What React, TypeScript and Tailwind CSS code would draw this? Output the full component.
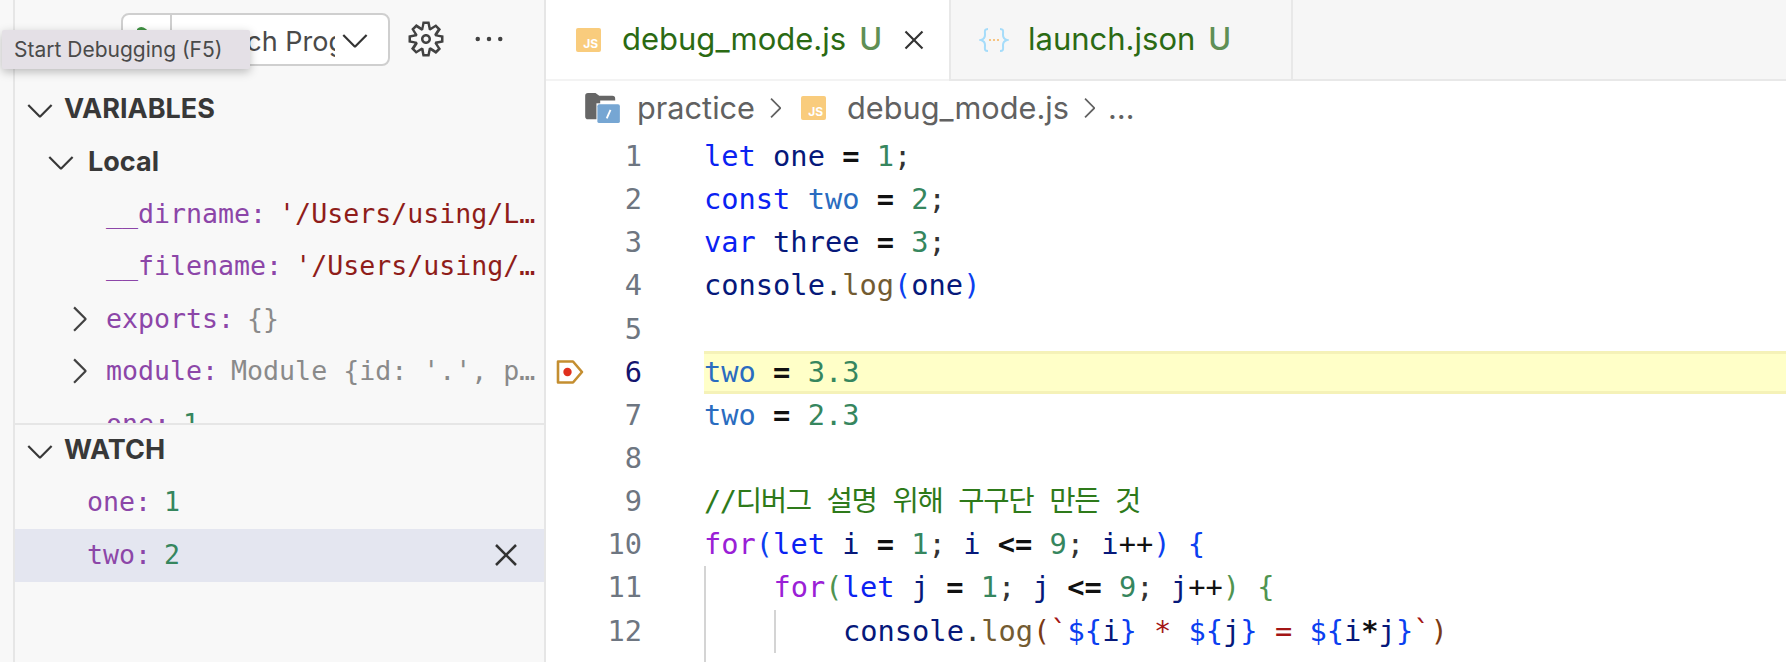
import { VscChevronDown, VscChevronRight, VscClose, VscEllipsis, VscGear } from "react-icons/vsc";

type Tok = [string, string];

const kw = "text-[#0a22f2]";
const id = "text-[#06187a]";
const cn = "text-[#2a6cc0]";
const nm = "text-[#36865e]";
const op = "text-[#111111] font-bold";
const pp = "text-[#111111]";
const pn = "text-[#333333]";
const fn = "text-[#735c32]";
const cm = "text-[#2e7a1a] tracking-[-1.4px]";
const ct = "text-[#9a20d6]";
const b1 = "text-[#0b3ff0]";
const b2 = "text-[#4f9450]";
const b3 = "text-[#7a3a14]";
const rd = "text-[#a31515]";

const lines: { indent?: number; toks: Tok[] }[] = [
  { toks: [["let", kw], [" one ", id], ["= ", op], ["1", nm], [";", pn]] },
  { toks: [["const", kw], [" ", id], ["two", cn], [" = ", op], ["2", nm], [";", pn]] },
  { toks: [["var", kw], [" three ", id], ["= ", op], ["3", nm], [";", pn]] },
  { toks: [["console", id], [".", pn], ["log", fn], ["(", b1], ["one", id], [")", b1]] },
  { toks: [] },
  { toks: [["two", cn], [" = ", op], ["3.3", nm]] },
  { toks: [["two", cn], [" = ", op], ["2.3", nm]] },
  { toks: [] },
  { toks: [["//디버그 설명 위해 구구단 만든 것", cm]] },
  {
    toks: [
      ["for", ct], ["(", b1], ["let", kw], [" i ", id], ["= ", op], ["1", nm], ["; ", pn], ["i ", id], ["<= ", op],
      ["9", nm], ["; ", pn], ["i", id], ["++", pp], [")", b1], [" ", pn], ["{", b1],
    ],
  },
  {
    indent: 1,
    toks: [
      ["for", ct], ["(", b2], ["let", kw], [" j ", id], ["= ", op], ["1", nm], ["; ", pn], ["j ", id], ["<= ", op],
      ["9", nm], ["; ", pn], ["j", id], ["++", pp], [")", b2], [" ", pn], ["{", b2],
    ],
  },
  {
    indent: 2,
    toks: [
      ["console", id], [".", pn], ["log", fn], ["(", b3], ["`", rd], ["${", b1], ["i", id], ["}", b1], [" ", rd], ["*", rd], [" ", rd],
      ["${", b1], ["j", id], ["}", b1], [" ", rd], ["=", rd], [" ", rd], ["${", b1], ["i", id], ["*", op], ["j", id], ["}", b1], ["`", rd], [")", b3],
    ],
  },
  { indent: 1, toks: [["}", b2]] },
];

function JsIcon() {
  return (
    <span className="flex h-[24px] w-[25px] shrink-0 items-end justify-end rounded-[2px] bg-[#f9cc7d] pr-[3px] pb-[2px] text-[12px] leading-none font-bold text-white">
      JS
    </span>
  );
}

function FolderIcon() {
  return (
    <svg width="36" height="30" viewBox="0 0 38 32" className="shrink-0">
      <path d="M0 3a3 3 0 0 1 3-3h8l4 3h14a3 3 0 0 1 3 3v2H16v20H3a3 3 0 0 1-3-3z" fill="#666666" />
      <rect x="12" y="11" width="26" height="21" fill="#ffffff" />
      <rect x="13" y="12" width="24" height="20" rx="2" fill="#76a6d3" />
      <path d="M23 27l4-9" stroke="#ffffff" strokeWidth="2" />
    </svg>
  );
}

function JsonIcon() {
  return (
    <svg width="30" height="28" viewBox="0 0 30 28" className="shrink-0">
      <path d="M9 3c-4 0-3 2-3 6 0 3-1 4-4 5 3 1 4 2 4 5 0 4-1 6 3 6" fill="none" stroke="#a5dcfa" strokeWidth="2" />
      <path d="M21 3c4 0 3 2 3 6 0 3 1 4 4 5-3 1-4 2-4 5 0 4 1 6-3 6" fill="none" stroke="#a5dcfa" strokeWidth="2" />
      <circle cx="11" cy="14" r="1.1" fill="#f7b866" />
      <circle cx="15" cy="14" r="1.1" fill="#f7b866" />
      <circle cx="19" cy="14" r="1.1" fill="#f7b866" />
    </svg>
  );
}

function Row({ chevron, children }: { chevron?: boolean; children: React.ReactNode }) {
  return (
    <div className="flex h-[52.4px] shrink-0 items-center pl-[91px] whitespace-nowrap">
      {chevron && <VscChevronRight className="mr-[7px] ml-[-47px] h-[40px] w-[40px] shrink-0 text-[#424242]" />}
      {children}
    </div>
  );
}

function Sidebar() {
  return (
    <div className="flex w-[533px] shrink-0 flex-col border-x-2 border-[#e6e6e6] bg-[#f8f8f8] font-['Inter',sans-serif] text-[#383838]">
      <div className="flex h-[84px] shrink-0 items-start pt-[13px] pl-[106px]">
        <div className="flex h-[53px] w-[269px] items-center rounded-[8px] border-2 border-[#cfcfcf] bg-white">
          <div className="h-full w-[49px] shrink-0 border-r-2 border-[#cfcfcf] pt-[11px] pl-[14px]">
            <svg width="18" height="22" viewBox="0 0 18 22">
              <path d="M0 3Q4 -1 9 3L18 11 9 19Q4 23 0 19z" fill="#3f9142" />
            </svg>
          </div>
          <div className="w-[163px] overflow-hidden pt-[5px] pl-[12px] text-[27px] whitespace-nowrap text-[#4a4a4a]">Launch Program</div>
          <VscChevronDown className="h-[40px] w-[40px] shrink-0 text-[#333333]" />
        </div>
        <VscGear className="mt-[6px] ml-[16px] h-[40px] w-[40px] text-[#424242]" />
        <VscEllipsis className="mt-[8px] ml-[25px] h-[36px] w-[36px] text-[#424242]" />
      </div>

      <div className="flex h-[339px] shrink-0 flex-col overflow-hidden">
        <div className="flex h-[51px] shrink-0 items-center pl-[5px] text-[27px] font-bold">
          <VscChevronDown className="h-[40px] w-[40px] shrink-0" />
          <span className="ml-[4px]">VARIABLES</span>
        </div>
        <div className="flex h-[52.7px] shrink-0 items-center pt-[2px] pl-[26px] text-[27px] font-bold">
          <VscChevronDown className="h-[40px] w-[40px] shrink-0" />
          <span className="ml-[7px]">Local</span>
        </div>
        <div className="flex flex-col font-['DejaVu_Sans_Mono',monospace] text-[26.6px]">
          <Row>
            <span className="text-[#8c46a8]">__dirname:</span>
            <span className="ml-[13px] text-[#8f1d1a]">'/Users/using/L…</span>
          </Row>
          <Row>
            <span className="text-[#8c46a8]">__filename:</span>
            <span className="ml-[13px] text-[#8f1d1a]">'/Users/using/…</span>
          </Row>
          <Row chevron>
            <span className="text-[#8c46a8]">exports:</span>
            <span className="ml-[13px] text-[#8a8a8a]">{"{}"}</span>
          </Row>
          <Row chevron>
            <span className="text-[#8c46a8]">module:</span>
            <span className="ml-[13px] text-[#8a8a8a]">{"Module {id: '.', p…"}</span>
          </Row>
          <Row>
            <span className="text-[#8c46a8]">one:</span>
            <span className="ml-[13px] text-[#36865e]">1</span>
          </Row>
        </div>
      </div>

      <div className="flex h-[53px] shrink-0 items-center border-t-2 border-[#e6e6e6] pl-[5px] text-[27px] font-bold">
        <VscChevronDown className="h-[40px] w-[40px] shrink-0" />
        <span className="ml-[4px]">WATCH</span>
      </div>
      <div className="font-['DejaVu_Sans_Mono',monospace] text-[26.6px]">
        <div className="flex h-[53px] items-center pb-[2px] pl-[72px]">
          <span className="text-[#8c46a8]">one:</span>
          <span className="ml-[13px] text-[#36865e]">1</span>
        </div>
        <div className="flex h-[53px] items-center bg-[#e4e6f0] pb-[2px] pl-[72px]">
          <span className="text-[#8c46a8]">two:</span>
          <span className="ml-[13px] text-[#36865e]">2</span>
          <VscClose className="mr-[18px] ml-auto h-[40px] w-[40px] text-[#333333]" />
        </div>
      </div>
    </div>
  );
}

function Tabs() {
  return (
    <div className="flex h-[81px] shrink-0 bg-[#f6f6f6] font-['Inter',sans-serif] text-[31px] text-[#2b6a13]">
      <div className="flex w-[403px] items-center border-b-2 border-[#f3f3f3] bg-white pl-[30px]">
        <JsIcon />
        <span className="ml-[21px]">debug_mode.js</span>
        <span className="ml-[13px] font-medium text-[#5f8f55]">U</span>
        <VscClose className="ml-[15px] h-[34px] w-[34px] text-[#333333]" />
      </div>
      <div className="flex w-[344px] items-center border-r-2 border-b-2 border-l-2 border-[#e8e8e8] pl-[28px]">
        <JsonIcon />
        <span className="ml-[19px]">launch.json</span>
        <span className="ml-[13px] font-medium text-[#5f8f55]">U</span>
      </div>
      <div className="flex-1 border-b-2 border-[#e8e8e8]" />
    </div>
  );
}

function Crumbs() {
  return (
    <div className="flex h-[54px] shrink-0 items-center pl-[39px] font-['Inter',sans-serif] text-[30.7px] text-[#616161]">
      <FolderIcon />
      <span className="ml-[16px]">practice</span>
      <VscChevronRight className="ml-[4px] h-[32px] w-[32px] text-[#616161]" />
      <span className="ml-[10px]">
        <JsIcon />
      </span>
      <span className="ml-[21px]">debug_mode.js</span>
      <VscChevronRight className="ml-[4px] h-[32px] w-[32px] text-[#616161]" />
      <span className="ml-[3px]">…</span>
    </div>
  );
}

function Code() {
  return (
    <div className="flex flex-col font-['DejaVu_Sans_Mono','Noto_Sans_CJK_KR',monospace] text-[28.7px]">
      {lines.map((line, i) => (
        <div key={i} className="flex h-[43.15px] shrink-0 items-center whitespace-pre">
          <div className="flex h-full w-[158px] shrink-0 items-center">
            <span className="flex w-[38px] shrink-0 justify-end">
              {i === 5 && (
                <svg width="28" height="28" viewBox="0 0 28 28">
                  <path d="M2 3.5h15l9 10.5-9 10.5H2z" fill="none" stroke="#c48e30" strokeWidth="2.6" strokeLinejoin="round" />
                  <circle cx="11.5" cy="14" r="4.2" fill="#e0301e" />
                </svg>
              )}
            </span>
            <span className={`ml-[2px] w-[56px] text-right ${i === 5 ? "text-[#14146e]" : "text-[#6e7681]"}`}>{i + 1}</span>
          </div>
          <div
            className={
              i === 5
                ? "flex h-full flex-1 items-center border-y-[3px] border-[#f5f2b8] bg-[#ffffc8]"
                : "flex h-full flex-1 items-center"
            }
          >
            {line.indent === 1 && <span className="h-full w-[69.5px] shrink-0 border-l-2 border-[#d4d4d4]" />}
            {line.indent === 2 && (
              <>
                <span className="h-full w-[69.5px] shrink-0 border-l-2 border-[#d4d4d4]" />
                <span className="h-full w-[69.5px] shrink-0 border-l-2 border-[#d4d4d4]" />
              </>
            )}
            <span>
              {line.toks.map(([t, c], j) => (
                <span key={j} className={c}>
                  {t}
                </span>
              ))}
            </span>
          </div>
        </div>
      ))}
    </div>
  );
}

export default function App() {
  return (
    <div className="relative flex h-[662px] w-[1786px] overflow-hidden bg-white">
      <div className="w-[13px] shrink-0 bg-[#f8f8f8]" />
      <Sidebar />
      <div className="flex min-w-0 flex-1 flex-col bg-white">
        <Tabs />
        <Crumbs />
        <Code />
      </div>
      <div className="absolute top-[30px] left-[2px] flex h-[39px] w-[248px] items-center rounded-[2px] bg-[#e4e0e6] pl-[12px] font-['Inter',sans-serif] text-[21px] whitespace-nowrap text-[#4a4a4a] shadow-[0_3px_10px_rgba(0,0,0,0.25)]">
        Start Debugging (F5)
      </div>
    </div>
  );
}
